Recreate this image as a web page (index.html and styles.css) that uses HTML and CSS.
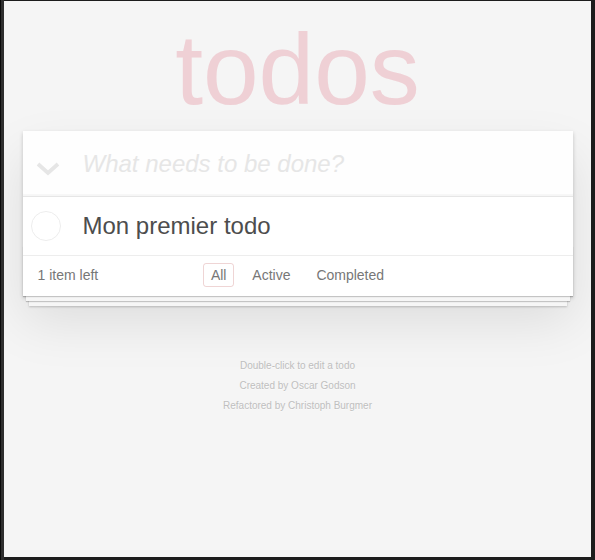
FILE: index.html
```html
<!DOCTYPE html>
<html lang="fr">
<head>
<meta charset="utf-8">
<title>todos</title>
<link rel="stylesheet" href="styles.css">
</head>
<body>
<div class="frame">
  <div class="page">
    <section class="todoapp">
      <header class="header">
        <h1>todos</h1>
        <div class="new-todo">
          <span class="toggle-all">
            <svg width="24" height="14" viewBox="0 0 24 14"><path d="M2 2 L12 11 L22 2" fill="none" stroke="#e6e6e6" stroke-width="3.8"/></svg>
          </span>
          <span class="placeholder">What needs to be done?</span>
        </div>
      </header>
      <section class="main">
        <ul class="todo-list">
          <li>
            <span class="toggle"><svg width="30" height="30" viewBox="0 0 30 30"><circle cx="15" cy="15" r="14.5" fill="none" stroke="#ededed" stroke-width="1"/></svg></span>
            <label>Mon premier todo</label>
          </li>
        </ul>
      </section>
      <footer class="footer">
        <span class="todo-count"><strong>1</strong> item left</span>
        <ul class="filters">
          <li><a class="selected">All</a></li>
          <li><a>Active</a></li>
          <li><a>Completed</a></li>
        </ul>
      </footer>
    </section>
    <footer class="info">
      <p>Double-click to edit a todo</p>
      <p>Created by Oscar Godson</p>
      <p>Refactored by Christoph Burgmer</p>
    </footer>
  </div>
</div>
</body>
</html>
```

FILE: styles.css
```css
html {
  background: #1c1c1c;
}
body {
  margin: 0;
  padding: 1px 4px 3px 4px;
  background: linear-gradient(to right, #0a0a0a 0, #0a0a0a 1px, #2e2e2e 1px, #2e2e2e 4px, transparent 4px);
}
.frame {
  height: 556px;
  background: #f5f5f5;
  overflow: hidden;
  font: 14px "Liberation Sans", Arial, sans-serif;
  line-height: 1.4em;
  color: #4d4d4d;
}
.page {
  max-width: 550px;
  margin: 0 auto;
  padding-top: 130px;
}
.todoapp {
  background: #fff;
  margin: 0 0 40px 0;
  position: relative;
  box-shadow: 0 2px 4px 0 rgba(0, 0, 0, 0.2), 0 25px 50px 0 rgba(0, 0, 0, 0.1);
}
.todoapp h1 {
  position: absolute;
  top: -112px;
  left: 0;
  width: 100%;
  margin: 0;
  font-size: 100px;
  line-height: 1;
  font-weight: 100;
  text-align: center;
  color: #efd0d5;
}
.new-todo {
  position: relative;
  height: 65px;
  box-sizing: border-box;
  padding: 16px 16px 16px 60px;
  font-size: 24px;
  line-height: 1.4em;
  background: rgba(0, 0, 0, 0.003);
  box-shadow: inset 0 -2px 1px rgba(0, 0, 0, 0.03);
}
.placeholder {
  font-style: italic;
  font-weight: 300;
  color: #e6e6e6;
}
.toggle-all {
  position: absolute;
  left: 13px;
  top: 31px;
  display: flex;
}
.main {
  position: relative;
  z-index: 2;
  border-top: 1px solid #e6e6e6;
}
.todo-list {
  margin: 0;
  padding: 0;
  list-style: none;
}
.todo-list li {
  position: relative;
  font-size: 24px;
  border-bottom: 1px solid #ededed;
}
.toggle {
  position: absolute;
  left: 8px;
  top: 0;
  bottom: 0;
  display: flex;
  align-items: center;
}
.todo-list label {
  display: block;
  padding: 15px 15px 15px 60px;
  line-height: 28px;
}
.footer {
  position: relative;
  color: #777;
  padding: 10px 15px;
  height: 20px;
  text-align: center;
  border-top: 1px solid #e6e6e6;
  margin-top: -1px;
}
.footer::before {
  content: "";
  position: absolute;
  right: 0;
  bottom: 0;
  left: 0;
  height: 50px;
  overflow: hidden;
  box-shadow: 0 1px 1px rgba(0, 0, 0, 0.2), 0 8px 0 -3px #f6f6f6, 0 9px 1px -3px rgba(0, 0, 0, 0.2), 0 16px 0 -6px #f6f6f6, 0 17px 2px -6px rgba(0, 0, 0, 0.2);
}
.todo-count {
  float: left;
  text-align: left;
  position: relative;
}
.todo-count strong {
  font-weight: 300;
}
.filters {
  margin: 0;
  padding: 0;
  list-style: none;
  position: absolute;
  right: 0;
  left: 0;
}
.filters li {
  display: inline;
}
.filters a {
  color: inherit;
  margin: 3px;
  padding: 3px 7px;
  border: 1px solid transparent;
  border-radius: 3px;
}
.filters a.selected {
  border-color: rgba(175, 47, 47, 0.2);
}
.info {
  margin: 65px auto 0;
  color: #bfbfbf;
  font-size: 10px;
  text-shadow: 0 1px 0 rgba(255, 255, 255, 0.5);
  text-align: center;
}
.info p {
  line-height: 1;
  margin: 10px 0;
}
```
